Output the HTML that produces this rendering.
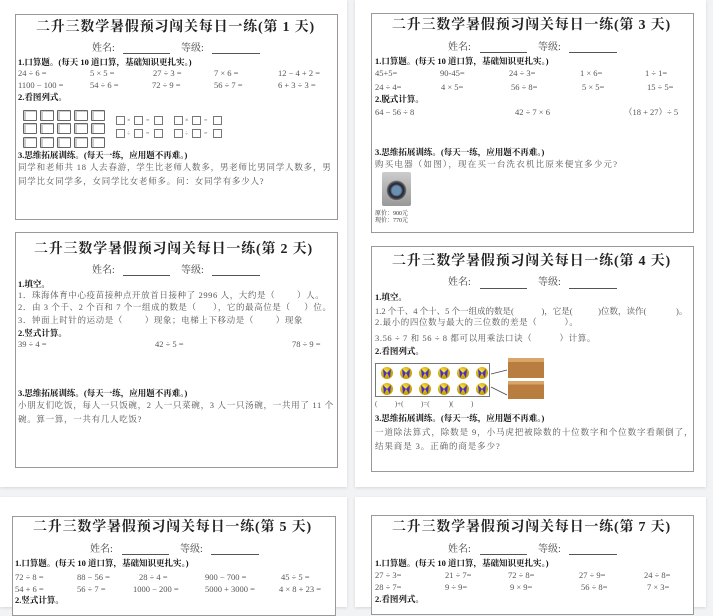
<!DOCTYPE html>
<html><head><meta charset="utf-8">
<style>
*{margin:0;padding:0;box-sizing:border-box}
body{width:713px;height:600px;background:#f2f3f5;position:relative;overflow:hidden;font-family:"Liberation Serif","Noto Serif CJK SC",serif;}
.card{position:absolute;background:#fff;box-shadow:0 1px 3px rgba(0,0,0,.12)}
.box{position:absolute;border:1px solid #999;background:#fff}
.t{position:absolute;white-space:nowrap;line-height:1}
.ti{font-size:14px;font-weight:bold;color:#222;letter-spacing:0.8px}
.nm{font-size:10px;color:#444}
.ul{position:absolute;border-bottom:1px solid #555;height:1px}
.h{font-size:8.5px;font-weight:bold;color:#111}
.b{font-size:8.5px;color:#555}
.s{font-size:6px;color:#555}
.sq{position:absolute;width:9px;height:9px;border:1px solid #777}
.cube{position:absolute;width:14px;height:11px;border:1px solid #666;border-radius:1px;box-shadow:inset 3px 2px 0 -1px #ccc}
</style></head><body>
<div class="card" style="left:0;top:0;width:347px;height:487px"></div>
<div class="card" style="left:355px;top:0;width:351px;height:487px"></div>
<div class="card" style="left:0;top:497px;width:347px;height:110px"></div>
<div class="card" style="left:355px;top:497px;width:351px;height:110px"></div>

<!-- Day 1 -->
<div class="box" style="left:15px;top:14px;width:323px;height:206px"></div>
<div class="t ti" style="left:36px;top:21px">二升三数学暑假预习闯关每日一练(第 1 天)</div>
<div class="t nm" style="left:92px;top:44px">姓名:</div><div class="ul" style="left:123px;top:53px;width:47px"></div>
<div class="t nm" style="left:181px;top:44px">等级:</div><div class="ul" style="left:212px;top:53px;width:48px"></div>
<div class="t h" style="left:18px;top:58px">1.口算题。(每天 10 道口算，基础知识更扎实。)</div>
<div class="t b" style="left:18px;top:69px">24 ÷ 6 =</div><div class="t b" style="left:90px;top:69px">5 × 5 =</div><div class="t b" style="left:153px;top:69px">27 ÷ 3 =</div><div class="t b" style="left:214px;top:69px">7 × 6 =</div><div class="t b" style="left:278px;top:69px">12 − 4 + 2 =</div>
<div class="t b" style="left:18px;top:81px">1100 − 100 =</div><div class="t b" style="left:90px;top:81px">54 ÷ 6 =</div><div class="t b" style="left:152px;top:81px">72 ÷ 9 =</div><div class="t b" style="left:214px;top:81px">56 ÷ 7 =</div><div class="t b" style="left:278px;top:81px">6 + 3 ÷ 3 =</div>
<div class="t h" style="left:18px;top:93px">2.看图列式。</div>
<div class="cube" style="left:23px;top:110px"></div><div class="cube" style="left:40px;top:110px"></div><div class="cube" style="left:57px;top:110px"></div><div class="cube" style="left:74px;top:110px"></div><div class="cube" style="left:91px;top:110px"></div>
<div class="cube" style="left:23px;top:123px"></div><div class="cube" style="left:40px;top:123px"></div><div class="cube" style="left:57px;top:123px"></div><div class="cube" style="left:74px;top:123px"></div><div class="cube" style="left:91px;top:123px"></div>
<div class="cube" style="left:23px;top:137px"></div><div class="cube" style="left:40px;top:137px"></div><div class="cube" style="left:57px;top:137px"></div><div class="cube" style="left:74px;top:137px"></div><div class="cube" style="left:91px;top:137px"></div>
<div class="sq" style="left:116px;top:116px"></div><div class="t s" style="left:127px;top:118px">×</div><div class="sq" style="left:134px;top:116px"></div><div class="t s" style="left:146px;top:118px">=</div><div class="sq" style="left:154px;top:116px"></div>
<div class="sq" style="left:174px;top:116px"></div><div class="t s" style="left:185px;top:118px">×</div><div class="sq" style="left:192px;top:116px"></div><div class="t s" style="left:204px;top:118px">=</div><div class="sq" style="left:213px;top:116px"></div>
<div class="sq" style="left:116px;top:129px"></div><div class="t s" style="left:127px;top:131px">÷</div><div class="sq" style="left:134px;top:129px"></div><div class="t s" style="left:146px;top:131px">=</div><div class="sq" style="left:154px;top:129px"></div>
<div class="sq" style="left:174px;top:129px"></div><div class="t s" style="left:185px;top:131px">÷</div><div class="sq" style="left:192px;top:129px"></div><div class="t s" style="left:204px;top:131px">=</div><div class="sq" style="left:213px;top:129px"></div>
<div class="t h" style="left:18px;top:151px">3.思维拓展训练。(每天一练，应用题不再难。)</div>
<div class="t b" style="left:18px;top:163px;letter-spacing:0.8px">同学和老师共 18 人去春游，学生比老师人数多，男老师比男同学人数多，男</div>
<div class="t b" style="left:18px;top:177px;letter-spacing:0.8px">同学比女同学多，女同学比女老师多。问：女同学有多少人?</div>

<!-- Day 2 -->
<div class="box" style="left:15px;top:232px;width:323px;height:236px"></div>
<div class="t ti" style="left:34px;top:243px">二升三数学暑假预习闯关每日一练(第 2 天)</div>
<div class="t nm" style="left:92px;top:266px">姓名:</div><div class="ul" style="left:123px;top:275px;width:47px"></div>
<div class="t nm" style="left:181px;top:266px">等级:</div><div class="ul" style="left:212px;top:275px;width:48px"></div>
<div class="t h" style="left:18px;top:280px">1.填空。</div>
<div class="t b" style="left:18px;top:291px;letter-spacing:0.6px">1．珠海体育中心疫苗接种点开放首日接种了 2996 人，大约是（&nbsp;&nbsp;&nbsp;&nbsp;&nbsp;&nbsp;&nbsp;&nbsp;）人。</div>
<div class="t b" style="left:18px;top:303px;letter-spacing:0.6px">2．由 3 个千、2 个百和 7 个一组成的数是（&nbsp;&nbsp;&nbsp;&nbsp;&nbsp;&nbsp;），它的最高位是（&nbsp;&nbsp;&nbsp;&nbsp;&nbsp;）位。</div>
<div class="t b" style="left:18px;top:316px;letter-spacing:0.6px">3．钟面上时针的运动是（&nbsp;&nbsp;&nbsp;&nbsp;&nbsp;&nbsp;&nbsp;&nbsp;）现象；电梯上下移动是（&nbsp;&nbsp;&nbsp;&nbsp;&nbsp;&nbsp;&nbsp;&nbsp;）现象</div>
<div class="t h" style="left:18px;top:329px">2.竖式计算。</div>
<div class="t b" style="left:18px;top:340px">39 ÷ 4 =</div><div class="t b" style="left:155px;top:340px">42 ÷ 5 =</div><div class="t b" style="left:292px;top:340px">78 ÷ 9 =</div>
<div class="t h" style="left:18px;top:389px">3.思维拓展训练。(每天一练，应用题不再难。)</div>
<div class="t b" style="left:18px;top:401px;letter-spacing:0.7px">小朋友们吃饭，每人一只饭碗，2 人一只菜碗，3 人一只汤碗，一共用了 11 个</div>
<div class="t b" style="left:18px;top:415px;letter-spacing:0.7px">碗。算一算，一共有几人吃饭?</div>

<!-- Day 3 -->
<div class="box" style="left:371px;top:13px;width:323px;height:220px"></div>
<div class="t ti" style="left:392px;top:19px">二升三数学暑假预习闯关每日一练(第 3 天)</div>
<div class="t nm" style="left:448px;top:43px">姓名:</div><div class="ul" style="left:480px;top:52px;width:47px"></div>
<div class="t nm" style="left:538px;top:43px">等级:</div><div class="ul" style="left:569px;top:52px;width:48px"></div>
<div class="t h" style="left:375px;top:57px">1.口算题。(每天 10 道口算，基础知识更扎实。)</div>
<div class="t b" style="left:375px;top:69px">45+5=</div><div class="t b" style="left:440px;top:69px">90-45=</div><div class="t b" style="left:509px;top:69px">24 ÷ 3=</div><div class="t b" style="left:580px;top:69px">1 × 6=</div><div class="t b" style="left:645px;top:69px">1 ÷ 1=</div>
<div class="t b" style="left:375px;top:83px">24 ÷ 4=</div><div class="t b" style="left:441px;top:83px">4 × 5=</div><div class="t b" style="left:511px;top:83px">56 ÷ 8=</div><div class="t b" style="left:582px;top:83px">5 × 5=</div><div class="t b" style="left:647px;top:83px">15 ÷ 5=</div>
<div class="t h" style="left:375px;top:95px">2.脱式计算。</div>
<div class="t b" style="left:375px;top:108px">64 − 56 ÷ 8</div><div class="t b" style="left:515px;top:108px">42 ÷ 7 × 6</div><div class="t b" style="left:624px;top:108px">（18 + 27）÷ 5</div>
<div class="t h" style="left:375px;top:148px">3.思维拓展训练。(每天一练，应用题不再难。)</div>
<div class="t b" style="left:375px;top:160px;letter-spacing:1.2px">购买电器（如图），现在买一台洗衣机比原来便宜多少元?</div>
<div style="position:absolute;left:382px;top:172px;width:29px;height:34px;background:linear-gradient(#ccc,#999);border-radius:2px"></div>
<div style="position:absolute;left:386px;top:180px;width:21px;height:21px;border-radius:50%;background:radial-gradient(#6a8fb0 30%,#223 45%,#555 60%,#bbb 70%)"></div>
<div class="t" style="left:375px;top:211px;font-size:6px;color:#333">原价：900元</div>
<div class="t" style="left:375px;top:218px;font-size:6px;color:#333">现价：770元</div>

<!-- Day 4 -->
<div class="box" style="left:371px;top:246px;width:323px;height:226px"></div>
<div class="t ti" style="left:392px;top:255px">二升三数学暑假预习闯关每日一练(第 4 天)</div>
<div class="t nm" style="left:448px;top:278px">姓名:</div><div class="ul" style="left:480px;top:288px;width:47px"></div>
<div class="t nm" style="left:538px;top:278px">等级:</div><div class="ul" style="left:569px;top:288px;width:48px"></div>
<div class="t h" style="left:375px;top:293px">1.填空。</div>
<div class="t b" style="left:375px;top:307px">1.2 个千、4 个十、5 个一组成的数是(&nbsp;&nbsp;&nbsp;&nbsp;&nbsp;&nbsp;&nbsp;&nbsp;&nbsp;&nbsp;&nbsp;&nbsp;&nbsp;)，它是(&nbsp;&nbsp;&nbsp;&nbsp;&nbsp;&nbsp;&nbsp;&nbsp;&nbsp;&nbsp;&nbsp;&nbsp;)位数，读作(&nbsp;&nbsp;&nbsp;&nbsp;&nbsp;&nbsp;&nbsp;&nbsp;&nbsp;&nbsp;&nbsp;&nbsp;&nbsp;&nbsp;)。</div>
<div class="t b" style="left:375px;top:318px;letter-spacing:0.6px">2.最小的四位数与最大的三位数的差是（&nbsp;&nbsp;&nbsp;&nbsp;&nbsp;&nbsp;&nbsp;&nbsp;&nbsp;&nbsp;）。</div>
<div class="t b" style="left:375px;top:334px;letter-spacing:0.6px">3.56 ÷ 7 和 56 ÷ 8 都可以用乘法口诀（&nbsp;&nbsp;&nbsp;&nbsp;&nbsp;&nbsp;&nbsp;&nbsp;&nbsp;&nbsp;）计算。</div>
<div class="t h" style="left:375px;top:347px">2.看图列式。</div>
<div style="position:absolute;left:375px;top:363px;width:115px;height:34px;border:1px solid #777"></div>
<svg style="position:absolute;left:375px;top:363px" width="135" height="40">
<defs><radialGradient id="g" cx="0.4" cy="0.35"><stop offset="0" stop-color="#ffe74a"/><stop offset="1" stop-color="#c9a500"/></radialGradient></defs>
<g>
<circle cx="12" cy="10" r="6" fill="url(#g)"/><circle cx="31" cy="10" r="6" fill="url(#g)"/><circle cx="50" cy="10" r="6" fill="url(#g)"/><circle cx="69" cy="10" r="6" fill="url(#g)"/><circle cx="88" cy="10" r="6" fill="url(#g)"/><circle cx="107" cy="10" r="6" fill="url(#g)"/>
<circle cx="12" cy="26" r="6" fill="url(#g)"/><circle cx="31" cy="26" r="6" fill="url(#g)"/><circle cx="50" cy="26" r="6" fill="url(#g)"/><circle cx="69" cy="26" r="6" fill="url(#g)"/><circle cx="88" cy="26" r="6" fill="url(#g)"/><circle cx="107" cy="26" r="6" fill="url(#g)"/>
</g>
<g fill="#4a2fc0">
<path d="M8 6 L12 10 L9 15 Z M16 6 L12 10 L15 15 Z"/><path d="M27 6 L31 10 L28 15 Z M35 6 L31 10 L34 15 Z"/><path d="M46 6 L50 10 L47 15 Z M54 6 L50 10 L53 15 Z"/><path d="M65 6 L69 10 L66 15 Z M73 6 L69 10 L72 15 Z"/><path d="M84 6 L88 10 L85 15 Z M92 6 L88 10 L91 15 Z"/><path d="M103 6 L107 10 L104 15 Z M111 6 L107 10 L110 15 Z"/>
<path d="M8 22 L12 26 L9 31 Z M16 22 L12 26 L15 31 Z"/><path d="M27 22 L31 26 L28 31 Z M35 22 L31 26 L34 31 Z"/><path d="M46 22 L50 26 L47 31 Z M54 22 L50 26 L53 31 Z"/><path d="M65 22 L69 26 L66 31 Z M73 22 L69 26 L72 31 Z"/><path d="M84 22 L88 26 L85 31 Z M92 22 L88 26 L91 31 Z"/><path d="M103 22 L107 26 L104 31 Z M111 22 L107 26 L110 31 Z"/>
</g>
<path d="M116 11 L132 7 M116 24 L132 32" stroke="#444" stroke-width="0.7"/>
</svg>
<div style="position:absolute;left:508px;top:358px;width:36px;height:20px;background:linear-gradient(#d9a56a 0 20%,#b97d40 20%);"></div>
<div style="position:absolute;left:508px;top:381px;width:36px;height:18px;background:linear-gradient(#d9a56a 0 20%,#b97d40 20%);"></div>
<div class="t b" style="left:375px;top:401px;font-size:7px">(&nbsp;&nbsp;&nbsp;&nbsp;&nbsp;&nbsp;&nbsp;&nbsp;&nbsp;&nbsp;)+(&nbsp;&nbsp;&nbsp;&nbsp;&nbsp;&nbsp;&nbsp;&nbsp;&nbsp;&nbsp;)=(&nbsp;&nbsp;&nbsp;&nbsp;&nbsp;&nbsp;&nbsp;&nbsp;&nbsp;&nbsp;&nbsp;)(&nbsp;&nbsp;&nbsp;&nbsp;&nbsp;&nbsp;&nbsp;&nbsp;&nbsp;&nbsp;)</div>
<div class="t h" style="left:375px;top:414px">3.思维拓展训练。(每天一练，应用题不再难。)</div>
<div class="t b" style="left:375px;top:428px;letter-spacing:0.9px">一道除法算式，除数是 9，小马虎把被除数的十位数字和个位数字看颠倒了，</div>
<div class="t b" style="left:375px;top:442px;letter-spacing:0.9px">结果商是 3。正确的商是多少?</div>

<!-- Day 5 -->
<div class="box" style="left:12px;top:516px;width:324px;height:100px"></div>
<div class="t ti" style="left:33px;top:521px">二升三数学暑假预习闯关每日一练(第 5 天)</div>
<div class="t nm" style="left:90px;top:545px">姓名:</div><div class="ul" style="left:122px;top:554px;width:47px"></div>
<div class="t nm" style="left:180px;top:545px">等级:</div><div class="ul" style="left:211px;top:554px;width:48px"></div>
<div class="t h" style="left:15px;top:559px">1.口算题。(每天 10 道口算，基础知识更扎实。)</div>
<div class="t b" style="left:15px;top:573px">72 ÷ 8 =</div><div class="t b" style="left:77px;top:573px">88 − 56 =</div><div class="t b" style="left:139px;top:573px">28 ÷ 4 =</div><div class="t b" style="left:205px;top:573px">900 − 700 =</div><div class="t b" style="left:281px;top:573px">45 ÷ 5 =</div>
<div class="t b" style="left:15px;top:585px">54 + 6 =</div><div class="t b" style="left:77px;top:585px">56 ÷ 7 =</div><div class="t b" style="left:133px;top:585px">1000 − 200 =</div><div class="t b" style="left:205px;top:585px">5000 + 3000 =</div><div class="t b" style="left:279px;top:585px">4 × 8 + 23 =</div>
<div class="t h" style="left:15px;top:596px">2.竖式计算。</div>

<!-- Day 7 -->
<div class="box" style="left:371px;top:515px;width:323px;height:100px"></div>
<div class="t ti" style="left:392px;top:521px">二升三数学暑假预习闯关每日一练(第 7 天)</div>
<div class="t nm" style="left:448px;top:545px">姓名:</div><div class="ul" style="left:480px;top:554px;width:47px"></div>
<div class="t nm" style="left:538px;top:545px">等级:</div><div class="ul" style="left:569px;top:554px;width:48px"></div>
<div class="t h" style="left:375px;top:559px">1.口算题。(每天 10 道口算，基础知识更扎实。)</div>
<div class="t b" style="left:375px;top:571px">27 ÷ 3=</div><div class="t b" style="left:445px;top:571px">21 ÷ 7=</div><div class="t b" style="left:508px;top:571px">72 ÷ 8=</div><div class="t b" style="left:579px;top:571px">27 ÷ 9=</div><div class="t b" style="left:644px;top:571px">24 ÷ 8=</div>
<div class="t b" style="left:375px;top:583px">28 ÷ 7=</div><div class="t b" style="left:445px;top:583px">9 ÷ 9=</div><div class="t b" style="left:510px;top:583px">9 × 9=</div><div class="t b" style="left:581px;top:583px">56 ÷ 8=</div><div class="t b" style="left:647px;top:583px">7 × 3=</div>
<div class="t h" style="left:375px;top:595px">2.看图列式。</div>
</body></html>
